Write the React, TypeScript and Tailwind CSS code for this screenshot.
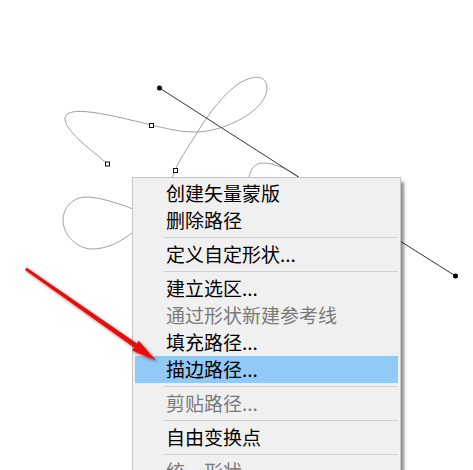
import React from "react";

type Item = { label: string; disabled?: boolean; active?: boolean };

const groups: Item[][] = [
  [{ label: "创建矢量蒙版" }, { label: "删除路径" }],
  [{ label: "定义自定形状..." }],
  [
    { label: "建立选区..." },
    { label: "通过形状新建参考线", disabled: true },
    { label: "填充路径..." },
    { label: "描边路径...", active: true },
  ],
  [{ label: "剪贴路径...", disabled: true }],
  [{ label: "自由变换点" }],
  [{ label: "统一形状", disabled: true }],
];

function Row({ item }: { item: Item }) {
  return (
    <div
      className={
        "h-[27px] pl-[31px] pb-[2px] flex items-center text-[19px] leading-[25px] whitespace-nowrap " +
        (item.active ? "bg-[#91c9f7] text-black" : item.disabled ? "text-[#7a7a7a]" : "text-black")
      }
    >
      {item.label}
    </div>
  );
}

function Canvas() {
  return (
    <svg className="absolute left-0 top-0" width="473" height="470" viewBox="0 0 473 470" fill="none">
      <path
        d="M107.5 164 C92 150 68 134 65 120 C64 112 74 111 84 111.5 C105 113 130 120 151.5 125 C165 128 178 132 195 132 C225 132 268 110 267 87 C266 76 256 76 248 79 C230 85 210 112 200 128 C190 145 182 155 175 170 L172 178"
        stroke="#a0a0a0"
        strokeWidth="1"
      />
      <path
        d="M133 209 C115 202 98 197 85 197 C72 198 63 208 63 220 C63 236 78 249 92 249 C108 249 122 241 133 232"
        stroke="#a0a0a0"
        strokeWidth="1"
      />
      <path d="M249 178 C250 168 256 163 263 163 C275 163 290 170 300 178" stroke="#a0a0a0" strokeWidth="1" />
      <path d="M159.5 88 L300 178" stroke="#333" strokeWidth="1" />
      <path d="M400 241 L455.5 276" stroke="#333" strokeWidth="1" />
      <circle cx="159.5" cy="88" r="2.5" fill="#000" />
      <circle cx="455.5" cy="276" r="2.5" fill="#000" />
      <rect x="105.5" y="162" width="4" height="4" fill="#fff" stroke="#111" />
      <rect x="149.5" y="123.5" width="4" height="4" fill="#fff" stroke="#111" />
      <rect x="173.5" y="168.5" width="4" height="4" fill="#fff" stroke="#111" />
    </svg>
  );
}

function Arrow() {
  return (
    <svg className="absolute left-0 top-0" width="473" height="470" viewBox="0 0 473 470" fill="none">
      <defs>
        <filter id="arrowShadow" x="-20%" y="-20%" width="150%" height="150%">
          <feDropShadow dx="1.5" dy="1.5" stdDeviation="1.6" floodColor="#000" floodOpacity="0.5" />
        </filter>
      </defs>
      <path
        d="M25 270 L26.5 267.5 L137 343.5 L138.5 340.5 L156 360.5 L132 350.5 L134 347.5 Z"
        fill="#e81010"
        filter="url(#arrowShadow)"
      />
    </svg>
  );
}

export default function App() {
  return (
    <div
      className="relative w-[473px] h-[470px] overflow-hidden bg-white"
      style={{ fontFamily: '"Noto Sans CJK SC", "Noto Sans", sans-serif' }}
    >
      <Canvas />
      <div className="absolute left-[132px] top-[177px] w-[269px] h-[320px] bg-[#f0f0f0] border border-[#c6c6c6] shadow-[4px_4px_3px_-1px_rgba(0,0,0,0.45)] pt-[2px] px-[2px]">
        {groups.map((group, i) => (
          <div key={i}>
            {i > 0 && (
              <div className="h-[7px] flex items-center pl-[28px]">
                <div className="h-[1px] w-full bg-[#d2d2d2]" />
              </div>
            )}
            {group.map((item) => (
              <Row key={item.label} item={item} />
            ))}
          </div>
        ))}
      </div>
      <Arrow />
    </div>
  );
}
